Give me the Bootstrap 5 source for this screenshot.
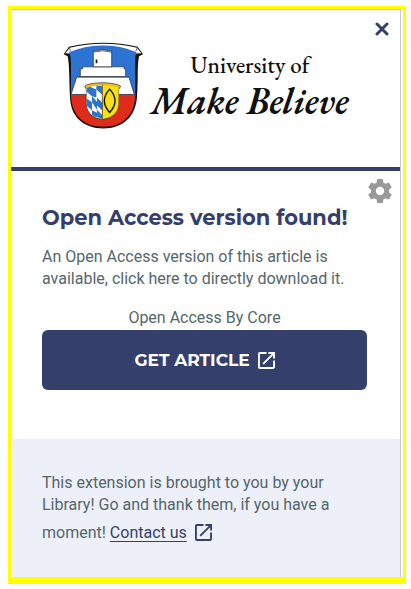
<!DOCTYPE html>
<html lang="en">
<head>
<meta charset="utf-8">
<meta name="viewport" content="width=device-width, initial-scale=1">
<title>Open Access version found</title>
<link href="https://cdn.jsdelivr.net/npm/bootstrap@5.3.0/dist/css/bootstrap.min.css" rel="stylesheet">
<style>
  :root { --navy: #34406b; --slate: #54666b; }
  body { font-family: Roboto, "Liberation Sans", sans-serif; font-size: 16px; line-height: 22px; color: var(--slate); background: #fff; }
  .frame { margin: 6px 5px 5px 8px; border: 3px solid #ff0; border-bottom-width: 7px; padding-right: 2px; }
  .popup { border-top: 1px solid #c3c7d8; border-right: 1px solid #c3c7d8; }
  .masthead { border-bottom: 4px solid var(--navy); padding: 32px 52px 38px; }
  .crest { width: 80px; height: 87px; flex: none; }
  .brand { font-family: "EB Garamond", "Liberation Serif", serif; color: #111; text-align: center; padding-top: 8px; }
  .brand-top { font-size: 23px; line-height: 30px; font-weight: 500; }
  .brand-main { font-size: 37px; line-height: 40px; font-style: italic; font-weight: 600; white-space: nowrap; }
  .close-btn { top: 12px; right: 11px; line-height: 0; }
  .gear-btn { top: 8px; right: 8px; line-height: 0; }
  .message { padding: 32px 33px 49px 31px; }
  .message h1 { font-family: Montserrat, Inter, sans-serif; font-size: 21px; line-height: 30px; font-weight: 700; color: var(--navy); margin-bottom: 13px; white-space: nowrap; }
  .message p { margin-bottom: 17px; }
  .source { padding-bottom: 1px; }
  .get-btn { --bs-btn-bg: var(--navy); --bs-btn-color: #fff; --bs-btn-hover-bg: #283358; --bs-btn-hover-color: #fff; font-family: Montserrat, Inter, sans-serif; font-size: 17px; line-height: 24px; font-weight: 700; padding: 18px 12px; border: 0; border-radius: 6px; }
  .thanks { background: #edf0f8; padding: 33px 31px 28px; }
  .thanks a { color: var(--navy); text-underline-offset: 3px; }
  .contact-row { line-height: 33px; }
</style>
<script src="https://cdn.jsdelivr.net/npm/bootstrap@5.3.0/dist/js/bootstrap.bundle.min.js" defer></script>
</head>
<body>
<svg class="d-none" aria-hidden="true">
  <symbol id="open-new" viewBox="3 3 18 18"><path fill="currentColor" d="M19 19H5V5h7V3H5a2 2 0 0 0-2 2v14a2 2 0 0 0 2 2h14c1.100 0 2-.9 2-2v-7h-2v7zM14 3v2h3.590l-9.830 9.830 1.410 1.410L19 6.410V10h2V3h-7z"/></symbol>
</svg>
<div class="frame">
  <div class="popup">
    <header class="masthead position-relative d-flex gap-2">
      <svg class="crest" viewBox="24 20 240 260" role="img" aria-label="University crest">
        <defs>
          <clipPath id="outer"><path d="M42 50Q145 8 245 50C237 64 242 100 241 180C238 243 200 274 145 274C90 274 50 243 48 180C47 100 51 64 42 50Z"/></clipPath>
          <clipPath id="inner"><path d="M94 157Q142 141 191 157V205Q188 244 142 250Q97 244 95 205Z"/></clipPath>
        </defs>
        <path fill="#111" d="M26 56L42 34Q145 10 248 34L264 56L252 62C246 90 250 130 246 184C242 244 204 279 145 279C86 279 46 244 45 184C42 130 44 90 38 62Z"/>
        <path fill="#fff" d="M31 53L44 37Q145 13 246 37L259 53L244 54Q145 14 44 54Z"/>
        <path fill="none" stroke="#333" stroke-width="2" d="M42 34L47 48M248 34L242 48"/>
        <g clip-path="url(#outer)">
          <path fill="#2d74d2" d="M30 10H260V180H30z"/>
          <path fill="#df2b1b" d="M30 177H260V285H30z"/>
          <path fill="#fff" stroke="#222" stroke-width="2" d="M65 125H222L238 177H48Z"/>
          <path fill="#fff" stroke="#222" stroke-width="2" d="M76 123V100H83V94H207V100H212V123Z"/>
          <path fill="#fff" stroke="#222" stroke-width="2" d="M115 94V47Q143 38 170 47V94Z"/>
          <path fill="none" stroke="#222" stroke-width="2" d="M115 50Q143 42 170 50"/>
          <path fill="#111" d="M122 72h5v11h-5z"/>
        </g>
        <path fill="#e8c21c" stroke="#222" stroke-width="2" d="M89 152L97 147Q142 136 188 147L197 152L191 162V205Q188 248 142 252Q97 248 94 205V162Z"/>
        <g clip-path="url(#inner)">
          <path fill="#fff" d="M88 140H142V255H88z"/>
          <path fill="#2d74d2" d="M94 145l17 12v25l-17-14zM124 145l17 8v24l-17-15zM111 157l13 5v24l-13-4zM94 188l17 12v24l-17-14zM111 182l15 17v24l-15-23zM126 186l16 16v23l-16-15zM111 224l15 8v24l-15-10zM126 223l16 16v16l-16-12z"/>
          <path fill="#f7df18" d="M142 140H196V255H142z"/>
        </g>
        <path stroke="#222" stroke-width="2" d="M142 147V251"/>
        <path fill="#f7df18" stroke="#111" stroke-width="4" d="M164 161Q132 196 164 231Q196 196 164 161Z"/>
      </svg>
      <div class="brand">
        <div class="brand-top">University of</div>
        <div class="brand-main">Make Believe</div>
      </div>
      <button type="button" class="close-btn btn p-0 border-0 position-absolute" aria-label="Close">
        <svg width="14" height="14" viewBox="0 0 14 14"><path d="M2 2l10 10M12 2l-10 10" stroke="#34406b" stroke-width="3" stroke-linecap="round"/></svg>
      </button>
    </header>
    <main class="message position-relative">
      <button type="button" class="gear-btn btn p-0 border-0 position-absolute" aria-label="Settings">
        <svg width="24" height="24" viewBox="2 2 20 20"><path fill="#999" d="M19.430 12.980c.04-.32.07-.64.07-.98s-.03-.66-.07-.98l2.110-1.650c.19-.15.24-.42.12-.64l-2-3.460c-.12-.22-.39-.3-.61-.22l-2.490 1c-.52-.4-1.080-.73-1.690-.98l-.38-2.650C14.460 2.180 14.250 2 14 2h-4c-.25 0-.46.18-.49.42l-.38 2.650c-.61.25-1.170.59-1.690.98l-2.490-1c-.23-.09-.49 0-.61.22l-2 3.460c-.13.22-.07.49.12.64l2.110 1.650c-.04.32-.07.65-.07.98s.03.66.07.98l-2.110 1.650c-.19.15-.24.42-.12.64l2 3.460c.12.22.39.3.61.22l2.490-1c.52.4 1.080.73 1.690.98l.38 2.650c.03.24.24.42.49.42h4c.25 0 .46-.18.49-.42l.38-2.650c.61-.25 1.170-.59 1.690-.98l2.490 1c.23.09.49 0 .61-.22l2-3.460c.12-.22.07-.49-.12-.64l-2.110-1.650zM12 15.500a3.500 3.500 0 1 1 0-7 3.500 3.500 0 0 1 0 7z"/></svg>
      </button>
      <h1>Open Access version found!</h1>
      <p>An Open Access version of this article is available, click here to directly download it.</p>
      <div class="source text-center">Open Access By Core</div>
      <button type="button" class="get-btn btn w-100 d-flex justify-content-center align-items-center gap-2">
        GET ARTICLE
        <svg width="17" height="17" aria-hidden="true"><use href="#open-new"/></svg>
      </button>
    </main>
    <footer class="thanks">
      <div>This extension is brought to you by your Library! Go and thank them, if you have a</div>
      <div class="contact-row d-flex align-items-center gap-2"><span>moment! <a href="#contact">Contact us</a></span>
        <a href="#contact" class="d-flex" aria-label="Contact us in a new tab"><svg width="17" height="17"><use href="#open-new"/></svg></a>
      </div>
    </footer>
  </div>
</div>
</body>
</html>
